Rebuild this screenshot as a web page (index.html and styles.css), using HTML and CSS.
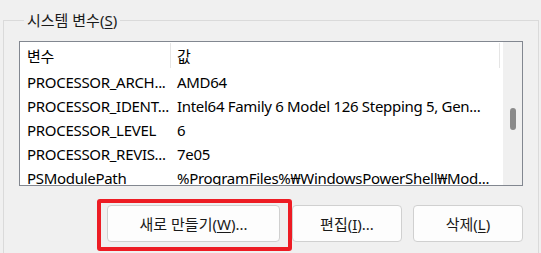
FILE: index.html
```html
<!DOCTYPE html>
<html lang="ko">
<head>
<meta charset="utf-8">
<link rel="stylesheet" href="styles.css">
</head>
<body>
<fieldset class="group">
  <legend class="group-label">시스템 변수(<u>S</u>)</legend>
  <div class="listbox">
    <div class="list">
      <div class="row head">
        <div class="cell c1">변수</div>
        <div class="cell c2">값</div>
      </div>
      <div class="row"><div class="cell c1">PROCESSOR_ARCH...</div><div class="cell c2">AMD64</div></div>
      <div class="row"><div class="cell c1">PROCESSOR_IDENT...</div><div class="cell c2">Intel64 Family 6 Model 126 Stepping 5, Gen...</div></div>
      <div class="row"><div class="cell c1">PROCESSOR_LEVEL</div><div class="cell c2">6</div></div>
      <div class="row"><div class="cell c1">PROCESSOR_REVIS...</div><div class="cell c2">7e05</div></div>
      <div class="row"><div class="cell c1">PSModulePath</div><div class="cell c2">%ProgramFiles%₩WindowsPowerShell₩Mod...</div></div>
    </div>
    <div class="scrollbar"><div class="thumb"></div></div>
  </div>
  <div class="buttons">
    <div class="highlight"><button class="btn wide">새로 만들기(<u>W</u>)...</button></div>
    <button class="btn">편집(<u>I</u>)...</button>
    <button class="btn">삭제(<u>L</u>)</button>
  </div>
</fieldset>
</body>
</html>
```

FILE: styles.css
```css
html, body {
  margin: 0;
  padding: 0;
  background: #f0f0f0;
  overflow: hidden;
  width: 541px;
  height: 253px;
}
body {
  font-family: "Noto Sans", "Noto Sans CJK KR", sans-serif;
  font-size: 15px;
  color: #000;
}
.group {
  margin: 9px 0 0 3px;
  width: 536px;
  height: 244px;
  box-sizing: border-box;
  border: 1px solid #dadada;
  border-bottom: none;
  padding: 0 15px 0 15px;
  overflow: hidden;
}
.group-label {
  margin-left: 5px;
  padding: 0 3px;
  line-height: 22px;
  color: #1a1a1a;
}
u { text-decoration-thickness: 1px; text-underline-offset: 2px; }
.listbox {
  margin-top: 10px;
  width: 504px;
  height: 145px;
  box-sizing: border-box;
  border: 1px solid #828790;
  background: #fff;
  display: flex;
  overflow: hidden;
}
.list {
  width: 481px;
  flex: none;
}
.row {
  display: flex;
  height: 24px;
  align-items: center;
  line-height: 24px;
}
.row.head {
  height: 28px;
  align-items: flex-start;
}
.cell {
  white-space: nowrap;
  box-sizing: border-box;
  letter-spacing: -0.3px;
}
.c1 { width: 151px; padding-left: 7px; }
.c2 { width: 330px; padding-left: 6px; }
.head .cell { height: 25px; line-height: 27px; margin-top: 1px; border-right: 1px solid #e5e5e5; }
.head .c1 { width: 151px; }
.head .c2 { padding-left: 6px; width: 329px; }
.scrollbar {
  flex: 1;
  margin-left: 2px;
  background: #f0f0f0;
}
.thumb {
  width: 6px;
  height: 22px;
  margin: 66px auto 0;
  background: #8a8a8a;
  border-radius: 3px;
}
.buttons {
  display: flex;
  justify-content: flex-end;
  gap: 12px;
  width: 504px;
  margin-top: 19px;
}
.btn {
  width: 110px;
  height: 37px;
  box-sizing: border-box;
  border: 1px solid #d0d0d0;
  border-radius: 4px;
  background: #fdfdfd;
  font: inherit;
  color: #1a1a1a;
  padding: 0;
}
.btn.wide { width: 173px; }
.btn:last-child { margin-left: -1px; }
.highlight {
  position: relative;
  display: flex;
}
.highlight::after {
  content: "";
  position: absolute;
  left: -11px;
  top: -6px;
  right: -12px;
  bottom: -9px;
  border: 4px solid #ed1c24;
  border-radius: 3px;
  pointer-events: none;
}
```
